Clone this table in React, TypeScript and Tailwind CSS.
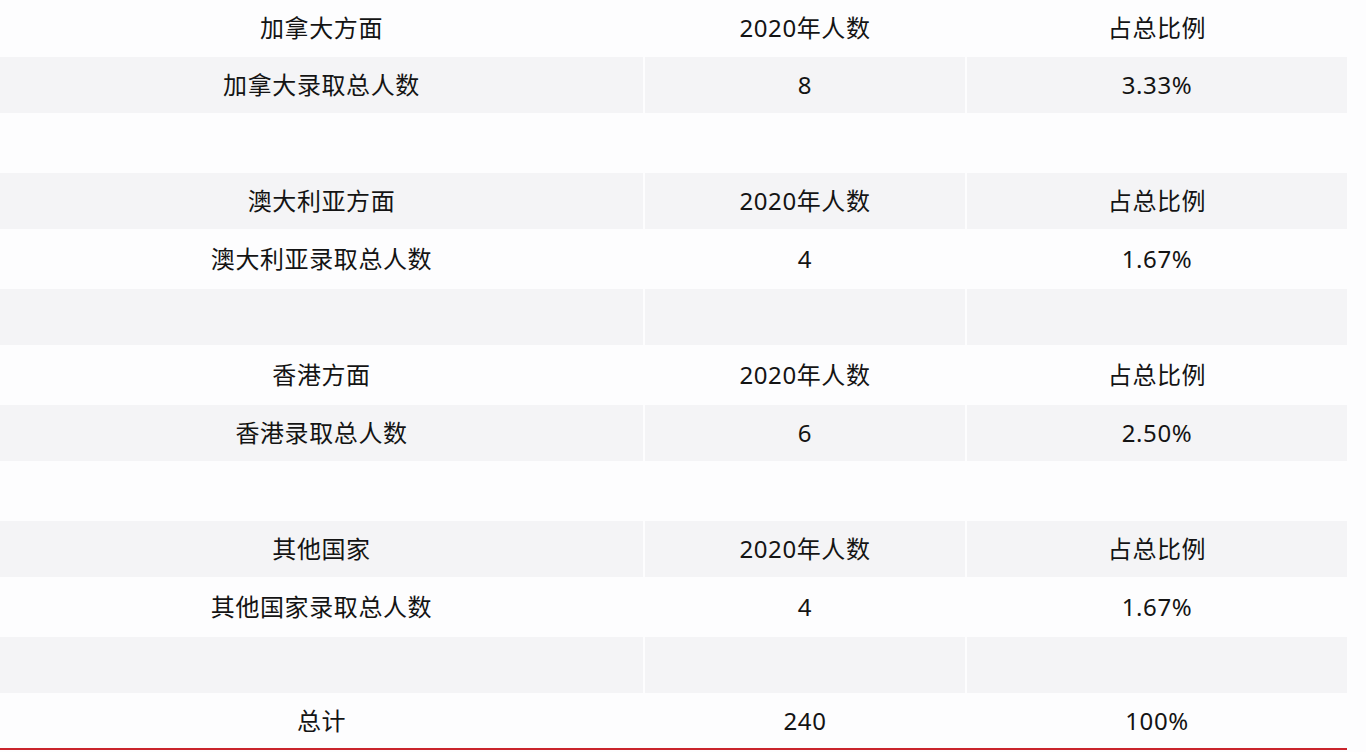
import React from "react";

type Row = { cells: [string, string, string]; shade: boolean; h: string; last?: boolean };

const rows: Row[] = [
  { cells: ["加拿大方面", "2020年人数", "占总比例"], shade: false, h: "h-[56px]" },
  { cells: ["加拿大录取总人数", "8", "3.33%"], shade: true, h: "h-[58px]" },
  { cells: ["", "", ""], shade: false, h: "h-[58px]" },
  { cells: ["澳大利亚方面", "2020年人数", "占总比例"], shade: true, h: "h-[58px]" },
  { cells: ["澳大利亚录取总人数", "4", "1.67%"], shade: false, h: "h-[58px]" },
  { cells: ["", "", ""], shade: true, h: "h-[58px]" },
  { cells: ["香港方面", "2020年人数", "占总比例"], shade: false, h: "h-[58px]" },
  { cells: ["香港录取总人数", "6", "2.50%"], shade: true, h: "h-[58px]" },
  { cells: ["", "", ""], shade: false, h: "h-[58px]" },
  { cells: ["其他国家", "2020年人数", "占总比例"], shade: true, h: "h-[58px]" },
  { cells: ["其他国家录取总人数", "4", "1.67%"], shade: false, h: "h-[58px]" },
  { cells: ["", "", ""], shade: true, h: "h-[58px]" },
  { cells: ["总计", "240", "100%"], shade: false, h: "h-[56px]", last: true },
];

const App = () => {
  return (
    <div
      className="w-[1366px] h-[752px] overflow-hidden bg-[#fdfdfe] text-[#141414] text-[24px] tracking-[0.6px]"
      style={{ fontFamily: "'Noto Sans', 'Noto Sans CJK SC', sans-serif" }}
    >
      <div className="w-[1347px] flex flex-col">
        {rows.map((row, i) => (
          <div
            key={i}
            className={`grid grid-cols-[643px_320px_380px] gap-x-[2px] ${row.h} ${
              row.last ? "border-b-2 border-[#c9242c]" : ""
            }`}
          >
            {row.cells.map((c, j) => (
              <div
                key={j}
                className={`flex items-center justify-center my-[1px] ${
                  row.shade ? "bg-[#f4f4f6]" : ""
                }`}
              >
                {c}
              </div>
            ))}
          </div>
        ))}
      </div>
    </div>
  );
};

export default App;
